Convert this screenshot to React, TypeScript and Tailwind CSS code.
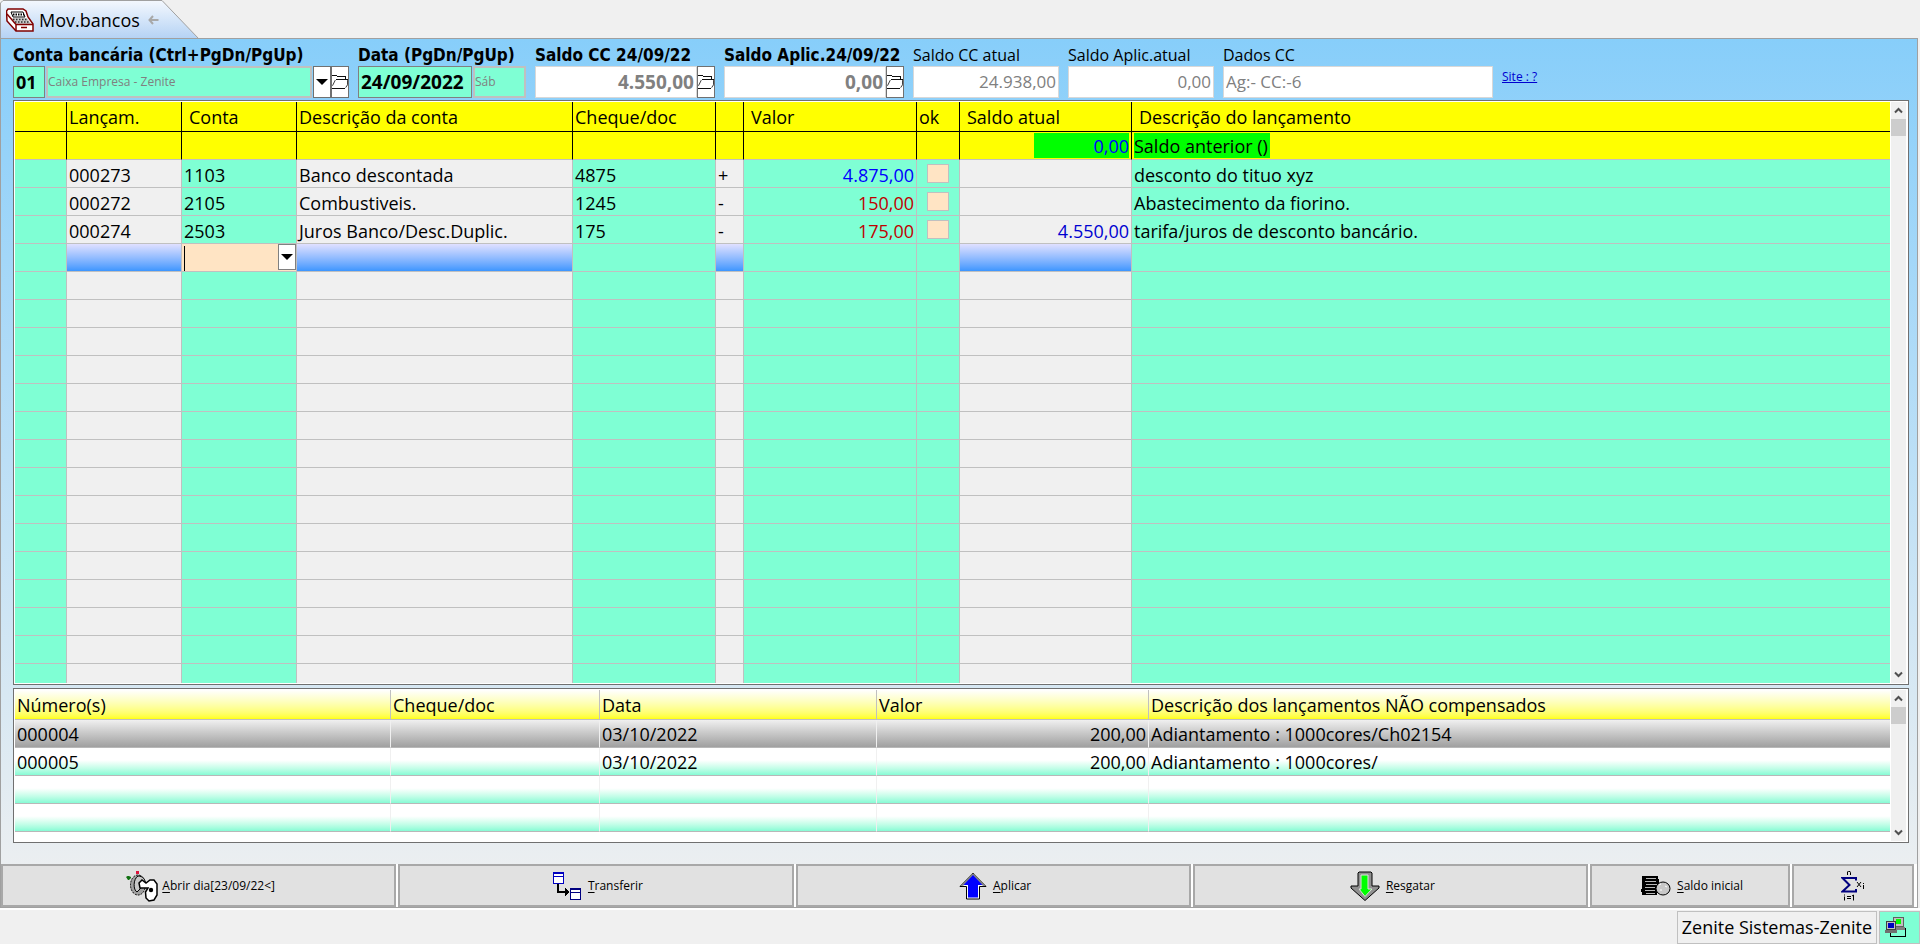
import type { ReactNode } from "react";

type Entry = {
  id: string;
  account: string;
  accountName: string;
  doc: string;
  sign: string;
  value: string;
  balance: string;
  text: string;
};

const entries: Entry[] = [
  { id: "000273", account: "1103", accountName: "Banco descontada", doc: "4875", sign: "+", value: "4.875,00", balance: "", text: "desconto do tituo xyz" },
  { id: "000272", account: "2105", accountName: "Combustiveis.", doc: "1245", sign: "-", value: "150,00", balance: "", text: "Abastecimento da fiorino." },
  { id: "000274", account: "2503", accountName: "Juros Banco/Desc.Duplic.", doc: "175", sign: "-", value: "175,00", balance: "4.550,00", text: "tarifa/juros de desconto bancário." },
];

const pending = [
  { id: "000004", date: "03/10/2022", value: "200,00", text: "Adiantamento : 1000cores/Ch02154" },
  { id: "000005", date: "03/10/2022", value: "200,00", text: "Adiantamento : 1000cores/" },
  { id: "", date: "", value: "", text: "" },
  { id: "", date: "", value: "", text: "" },
];

const aqua = "bg-[#7fffd4]";
const gray = "bg-[#f0f0f0]";
const highlight = "bg-linear-to-b from-[#e0e0ff] to-[#3c96ff]";
const columnColors = [aqua, gray, aqua, gray, aqua, gray, aqua, aqua, gray, aqua];
const cell = "h-[28px] border-b border-r border-[#c0c0c0] px-[2px] pb-0 whitespace-nowrap last:border-r-0";
const textCell = `${cell} pt-[3px] leading-[24px]`;
const headCell = "border-b border-r border-black pt-px pr-0 pb-0 text-left leading-[26px] font-normal whitespace-nowrap last:border-r-0";

function FolderIcon() {
  return (
    <svg width="17" height="16" viewBox="0 0 17 16" shapeRendering="crispEdges" fill="none" stroke="#000" aria-hidden="true">
      <path d="M0 1.5H5M5 2.5H14.500V5M4 5.500H17M0 14.500H14" />
      <path d="M3.5 6L0.500 12M16.500 6V11L14.500 14" stroke="#303030" shapeRendering="auto" />
    </svg>
  );
}

function DownTriangle() {
  return (
    <svg width="12" height="6" viewBox="0 0 12 6" aria-hidden="true">
      <path d="M0 0H12L6 6Z" />
    </svg>
  );
}

function FolderButton({ label }: { label: string }) {
  return (
    <button type="button" aria-label={label} className="flex w-[18px] shrink-0 items-center justify-center overflow-hidden border border-[#707070] bg-white">
      <FolderIcon />
    </button>
  );
}

function Chevron({ up }: { up?: boolean }) {
  return (
    <svg width="9" height="7" viewBox="0 0 9 7" fill="none" stroke="#505050" strokeWidth="2" aria-hidden="true">
      <path d={up ? "M1 5.5L4.5 2L8 5.5" : "M1 1.5L4.5 5L8 1.5"} />
    </svg>
  );
}

function ScrollBar() {
  return (
    <div className="flex w-[17px] shrink-0 flex-col border-l border-r border-white bg-[#f0f0f0]">
      <button aria-label="Rolar para cima" className="flex h-[17px] shrink-0 items-center justify-center">
        <Chevron up />
      </button>
      <div className="h-[17px] shrink-0 bg-[#cdcdcd]" />
      <div className="flex-1" />
      <button aria-label="Rolar para baixo" className="flex h-[17px] shrink-0 items-center justify-center">
        <Chevron />
      </button>
    </div>
  );
}

function Field({ id, label, width, bold, children }: { id: string; label: string; width: string; bold?: boolean; children: ReactNode }) {
  return (
    <div className={`flex shrink-0 flex-col ${width}`}>
      <label
        htmlFor={id}
        className={
          bold
            ? "h-[22px] font-['DejaVu_Sans_Condensed','DejaVu_Sans',sans-serif] text-[17px] leading-[22px] font-bold whitespace-nowrap"
            : "h-[22px] text-[16px] leading-[22px] whitespace-nowrap"
        }
      >
        {label}
      </label>
      <div className="flex h-[32px]">{children}</div>
    </div>
  );
}

function AmountInput({ id, value, bold }: { id: string; value: string; bold?: boolean }) {
  return (
    <input
      id={id}
      readOnly
      value={value}
      className={`w-full min-w-0 border border-[#d8d8d8] bg-white px-[2px] text-right text-[#808080] ${bold ? "text-[19px] font-bold" : "text-[17px]"}`}
    />
  );
}

function RegisterIcon() {
  return (
    <svg width="28" height="25" viewBox="0 0 28 25" aria-hidden="true">
      <path d="M2 1H17L20 3L22 9L27 16V23H10L1 13L0.500 3Z" fill="#fff" stroke="#800000" strokeWidth="1.500" />
      <path d="M5 4H17L19 9H7Z" fill="#fff" stroke="#000" />
      <path d="M7 6.500H18" stroke="#000" strokeWidth="2" strokeDasharray="1.500 1" />
      <path d="M6 10H21L25 16H10Z" fill="#c8c8c8" />
      <path d="M7 11.500H21M9 14H23" stroke="#303030" strokeWidth="1.500" strokeDasharray="1.500 1.500" />
      <path d="M1 6L10 16.500H27M10 16.500V23M15 19.500H21" fill="none" stroke="#800000" strokeWidth="1.500" />
    </svg>
  );
}

function KeyIcon() {
  return (
    <svg width="32" height="32" viewBox="0 0 32 32" aria-hidden="true">
      <path d="M10 1H13V4H10Z" fill="#dc143c" />
      <path d="M0 7L1.500 6H3L5 7V8L3 10H2Z" fill="#107010" />
      <ellipse cx="12" cy="15" rx="7.500" ry="10" fill="#a0a0a0" stroke="#000" strokeDasharray="2 1" />
      <path d="M12 6C17 6 20 10 19 14L14 19L11 22C7 20 7 9 12 6Z" fill="#c8c8c8" stroke="#000" />
      <path d="M13 13L16 10L20 13L24 10L28 10L31 14V25L28 30L23 31L20 28L19.500 22L22 18L14 18Z" fill="#fff" stroke="#000" strokeWidth="1.500" />
      <circle cx="25" cy="20" r="2.200" />
    </svg>
  );
}

function TransferIcon() {
  return (
    <svg width="28" height="28" viewBox="0 0 28 28" shapeRendering="crispEdges" aria-hidden="true">
      <rect x="0.5" y="0.5" width="10" height="11" fill="#fff" stroke="#0000c0" />
      <path d="M0 0H11V2H0ZM0 4H11V5H0Z" fill="#0000c0" />
      <rect x="17.5" y="16.5" width="10" height="11" fill="#fff" stroke="#000080" />
      <path d="M17 16H28V18H17ZM17 20H28V21H17Z" fill="#000080" />
      <path d="M4 12H6V19H12V16L16 20L12 24V21H4Z" />
    </svg>
  );
}

function ArrowUpIcon() {
  return (
    <svg width="28" height="28" viewBox="0 0 28 28" aria-hidden="true">
      <path d="M14 1L27 14.500H20.500V27H7.500V14.500H1Z" fill="#fff" stroke="#000" />
      <path d="M14 2L3 13.500" stroke="#808080" strokeWidth="2" />
      <path d="M14 2L25 13.500" stroke="#808080" strokeWidth="2" />
      <path d="M14 3L23.500 13H19V25.500H9V13H4.500Z" fill="#0000ff" />
    </svg>
  );
}

function ArrowDownIcon() {
  return (
    <svg width="30" height="30" viewBox="0 0 30 30" aria-hidden="true">
      <path d="M9 1H21L22 2V15H29V17L15 29.500L1 17V15H8V2Z" fill="#909090" stroke="#000" />
      <path d="M11 4H18V18H22L15 25.500L9 18H11Z" fill="#00ff00" stroke="#e0e0e0" />
    </svg>
  );
}

function CoinsIcon() {
  return (
    <svg width="30" height="20" viewBox="0 0 30 20" aria-hidden="true">
      <path d="M1 0H17V3H18V17H16V19H1V16H0V13H1Z" />
      <path d="M5 2.500H15M4 5.500H15M5 8.500H16M4 11.500H14M4 14.500H14M5 17.500H14" stroke="#b8b8b8" />
      <ellipse cx="22" cy="12.500" rx="7" ry="6.500" fill="#c8c8c8" stroke="#000" />
      <path d="M18 9L20 8M19 14H21M24 10L26 11" stroke="#fff" />
    </svg>
  );
}

function SumIcon() {
  return (
    <svg width="24" height="30" viewBox="0 0 24 30" fill="none" aria-hidden="true">
      <path d="M15 9.500V7H1.500L8.500 14L1.500 20.500H15V18" stroke="#000080" strokeWidth="2" />
      <path d="M6.500 4V0.500M6.500 1.500L7.500 0.500H9L9.500 1.500V4" stroke="#000" />
      <path d="M16 11L20 16M20 11L16 16M22.500 14V18M22.500 12V13" stroke="#000" />
      <path d="M3.500 25.500V29.500M3.500 23.500V24.500M6 25.500H10M6 27.500H10M11 25L12.500 24V29.500" stroke="#000" />
    </svg>
  );
}

function NetworkIcon() {
  return (
    <svg width="21" height="21" viewBox="0 0 21 21" shapeRendering="crispEdges" aria-hidden="true">
      <rect x="8.500" y="0.500" width="10" height="9" fill="#c0c0c0" stroke="#606060" />
      <rect x="11" y="2" width="5" height="5" fill="#00ff00" />
      <rect x="9" y="10" width="11" height="3" fill="#808080" />
      <rect x="1.500" y="4.500" width="9" height="8" fill="#c0c0c0" stroke="#404040" />
      <rect x="3" y="6" width="6" height="5" fill="#0000c0" />
      <rect x="0" y="13" width="12" height="3" fill="#707070" />
      <path d="M5.500 16V19.500H20.500V11" fill="none" stroke="#000" />
    </svg>
  );
}

function ActionButton({ icon, label, className }: { icon: ReactNode; label?: string; className: string }) {
  return (
    <button
      aria-label={label ?? "Somatório"}
      className={`flex min-w-0 items-center justify-center border-2 border-[#a8a8a8] bg-[#e1e1e1] text-[12px] ${className}`}
    >
      {icon}
      {label && (
        <span>
          <span className="underline underline-offset-2">{label[0]}</span>
          {label.slice(1)}
        </span>
      )}
    </button>
  );
}

export default function App() {
  return (
    <div className="flex h-screen flex-col bg-[#f0f0f0] font-['Open_Sans','Noto_Sans',sans-serif] text-[18px] text-black">
      <header className="grid h-[38px] shrink-0">
        <svg width="200" height="39" viewBox="0 0 200 39" className="col-start-1 row-start-1" aria-hidden="true">
          <defs>
            <linearGradient id="tab" x1="0" y1="0" x2="0" y2="1">
              <stop offset="0" stopColor="#f4f8fe" />
              <stop offset="1" stopColor="#b4d2f4" />
            </linearGradient>
          </defs>
          <path d="M0.500 39V3L3 0.500H162L199 39" fill="url(#tab)" stroke="#a0a0a0" />
        </svg>
        <div className="col-start-1 row-start-1 flex items-center gap-[5px] pt-px pl-[6px]">
          <RegisterIcon />
          <h1 className="text-[18px] leading-[24px]">Mov.bancos</h1>
          <svg width="11" height="10" viewBox="0 0 11 10" className="ml-[3px]" fill="none" stroke="#a8a8a8" strokeWidth="2" aria-hidden="true">
            <path d="M5 1L1.500 5L5 9M2 5H10.500" />
          </svg>
        </div>
      </header>

      <main className="mr-[2px] flex min-h-0 flex-1 flex-col border border-[#a0a0a0] bg-linear-to-b from-[#87cefa] to-[#f0f0f0]">
        <form className="flex shrink-0 gap-[9px] pt-[5px] pl-[12px]">
          <Field id="conta" label="Conta bancária (Ctrl+PgDn/PgUp)" width="w-[336px]" bold>
            <input id="conta" defaultValue="01" className="w-[32px] border border-[#808080] bg-[#7fffd4] px-[2px] font-bold" />
            <input aria-label="Nome da conta" readOnly value="Caixa Empresa - Zenite" className="ml-px min-w-0 flex-1 border-2 border-[#c0c0c0] bg-[#7fffd4] text-[12px] text-[#808080]" />
            <button aria-label="Escolher conta" type="button" className="ml-px flex w-[18px] shrink-0 items-center justify-center border border-[#707070] bg-white">
              <DownTriangle />
            </button>
            <FolderButton label="Abrir conta" />
          </Field>
          <Field id="data" label="Data (PgDn/PgUp)" width="w-[168px]" bold>
            <input id="data" defaultValue="24/09/2022" className="w-[114px] border border-[#808080] bg-[#7fffd4] px-[2px] text-[19px] font-bold" />
            <input aria-label="Dia da semana" readOnly value="Sáb" className="ml-px min-w-0 flex-1 border-2 border-[#c0c0c0] bg-[#7fffd4] text-[12px] text-[#808080]" />
          </Field>
          <Field id="saldo-cc" label="Saldo CC 24/09/22" width="w-[180px]" bold>
            <AmountInput id="saldo-cc" value="4.550,00" bold />
            <FolderButton label="Abrir saldo CC" />
          </Field>
          <Field id="saldo-aplic" label="Saldo Aplic.24/09/22" width="w-[180px]" bold>
            <AmountInput id="saldo-aplic" value="0,00" bold />
            <FolderButton label="Abrir saldo de aplicação" />
          </Field>
          <Field id="saldo-cc-atual" label="Saldo CC atual" width="w-[146px]">
            <AmountInput id="saldo-cc-atual" value="24.938,00" />
          </Field>
          <Field id="saldo-aplic-atual" label="Saldo Aplic.atual" width="w-[146px]">
            <AmountInput id="saldo-aplic-atual" value="0,00" />
          </Field>
          <Field id="dados-cc" label="Dados CC" width="w-[270px]">
            <input id="dados-cc" readOnly value="Ag:- CC:-6" className="w-full border border-[#d8d8d8] bg-white px-[2px] text-[17px] text-[#808080]" />
          </Field>
          <a href="#site" className="pt-[24px] text-[12px] leading-[18px] text-[#0000d0] underline">Site : ?</a>
        </form>

        <section className="mt-[2px] mr-[8px] ml-[12px] flex min-h-0 flex-1 border border-[#707070] bg-white p-px">
          <div className="min-w-0 flex-1 overflow-hidden">
            <table className="w-full table-fixed border-separate border-spacing-0">
              <colgroup>
                <col className="w-[52px]" />
                <col className="w-[115px]" />
                <col className="w-[115px]" />
                <col className="w-[276px]" />
                <col className="w-[143px]" />
                <col className="w-[28px]" />
                <col className="w-[173px]" />
                <col className="w-[43px]" />
                <col className="w-[172px]" />
                <col />
              </colgroup>
              <thead>
                <tr className="h-[30px] bg-[#ffff00]">
                  <th className={headCell} />
                  <th className={`${headCell} pl-[2px]`}>Lançam.</th>
                  <th className={`${headCell} pl-[7px]`}>Conta</th>
                  <th className={`${headCell} pl-[2px]`}>Descrição da conta</th>
                  <th className={`${headCell} pl-[2px]`}>Cheque/doc</th>
                  <th className={headCell} />
                  <th className={`${headCell} pl-[7px]`}>Valor</th>
                  <th className={`${headCell} pl-[2px]`}>ok</th>
                  <th className={`${headCell} pl-[7px]`}>Saldo atual</th>
                  <th className={`${headCell} pl-[7px]`}>Descrição do lançamento</th>
                </tr>
              </thead>
              <tbody>
                <tr className="bg-[#ffff00]">
                  {columnColors.slice(0, 8).map((_, i) => (
                    <td key={i} className="h-[28px] border-r border-b border-r-black border-b-[#c0c0c0] p-0" />
                  ))}
                  <td className="h-[28px] border-r border-b border-r-black border-b-[#c0c0c0] px-[2px] py-0">
                    <div className="ml-auto h-[25px] w-[95px] bg-[#00ff00] pt-px text-right leading-[24px] text-[#0000ff]">0,00</div>
                  </td>
                  <td className="h-[28px] border-b border-[#c0c0c0] px-[2px] py-0">
                    <div className="h-[25px] w-fit bg-[#00ff00] pt-px pr-[2px] leading-[24px] whitespace-nowrap">Saldo anterior ()</div>
                  </td>
                </tr>
                {entries.map((e) => (
                  <tr key={e.id}>
                    <td className={`${textCell} ${aqua}`} />
                    <td className={`${textCell} ${gray}`}>{e.id}</td>
                    <td className={`${textCell} ${aqua}`}>{e.account}</td>
                    <td className={`${textCell} ${gray}`}>{e.accountName}</td>
                    <td className={`${textCell} ${aqua}`}>{e.doc}</td>
                    <td className={`${textCell} ${gray}`}>{e.sign}</td>
                    <td className={`${textCell} ${aqua} text-right ${e.sign === "+" ? "text-[#0000ff]" : "text-[#c00000]"}`}>{e.value}</td>
                    <td className={`${cell} ${aqua} pt-[4px] align-top`}>
                      <input type="checkbox" aria-label={`ok ${e.id}`} className="mx-auto block h-[19px] w-[22px] appearance-none border border-[#c0c0c0] bg-[#ffe4c4]" />
                    </td>
                    <td className={`${textCell} ${gray} text-right text-[#0000d0]`}>{e.balance}</td>
                    <td className={`${textCell} ${aqua}`}>{e.text}</td>
                  </tr>
                ))}
                <tr>
                  {columnColors.map((color, i) =>
                    i === 2 ? (
                      <td key={i} className="h-[28px] border-r border-b border-[#c0c0c0] bg-white p-0">
                        <div className="flex h-[27px] bg-[#ffe4c4] pl-[2px]">
                          <span className="mt-[2px] w-px bg-black" />
                          <input aria-label="Conta do novo lançamento" className="min-w-0 flex-1 bg-transparent outline-none" />
                          <button aria-label="Escolher conta do lançamento" className="flex h-[26px] w-[18px] items-center justify-center border border-[#808080] bg-white">
                            <DownTriangle />
                          </button>
                        </div>
                      </td>
                    ) : (
                      <td key={i} className={`${cell} pt-0 ${color === gray ? highlight : color}`} />
                    ),
                  )}
                </tr>
                {Array.from({ length: 24 }, (_, r) => (
                  <tr key={r}>
                    {columnColors.map((color, i) => (
                      <td key={i} className={`${cell} pt-0 ${color}`} />
                    ))}
                  </tr>
                ))}
              </tbody>
            </table>
          </div>
          <ScrollBar />
        </section>

        <section className="mt-[3px] mr-[8px] mb-[21px] ml-[12px] flex h-[155px] shrink-0 border border-[#707070] bg-white p-px">
          <div className="min-w-0 flex-1 overflow-hidden">
            <table className="w-full table-fixed border-separate border-spacing-0">
              <colgroup>
                <col className="w-[376px]" />
                <col className="w-[209px]" />
                <col className="w-[277px]" />
                <col className="w-[272px]" />
                <col />
              </colgroup>
              <thead>
                <tr>
                  {["Número(s)", "Cheque/doc", "Data", "Valor", "Descrição dos lançamentos NÃO compensados"].map((h) => (
                    <th key={h} className="h-[30px] border-r border-b border-[#c0c0c0] bg-linear-to-b from-white to-[#ffff00] pt-px pr-0 pb-0 pl-[2px] text-left leading-[26px] font-normal whitespace-nowrap last:border-r-0">
                      {h}
                    </th>
                  ))}
                </tr>
              </thead>
              <tbody>
                {pending.map((p, r) => {
                  const c = `h-[28px] border-r border-b border-r-[#f0f0f0] border-b-[#b8b8b8] px-[2px] pt-px pb-0 leading-[24px] whitespace-nowrap last:border-r-0 ${
                    r === 0 ? "bg-linear-to-b from-[#f0f0f0] to-[#a0a0a0]" : "bg-linear-to-b from-white from-45% to-[#86fbd5]"
                  }`;
                  return (
                    <tr key={r}>
                      <td className={c}>{p.id}</td>
                      <td className={c} />
                      <td className={c}>{p.date}</td>
                      <td className={`${c} text-right`}>{p.value}</td>
                      <td className={c}>{p.text}</td>
                    </tr>
                  );
                })}
              </tbody>
            </table>
          </div>
          <ScrollBar />
        </section>

        <nav className="flex h-[43px] shrink-0 gap-[2px] bg-white pr-[3px]">
          <ActionButton icon={<KeyIcon />} label="Abrir dia[23/09/22<]" className="flex-1 gap-[4px] pl-[4px]" />
          <ActionButton icon={<TransferIcon />} label="Transferir" className="flex-1 gap-[7px] pl-[4px]" />
          <ActionButton icon={<ArrowUpIcon />} label="Aplicar" className="flex-1 gap-[6px] pl-[4px]" />
          <ActionButton icon={<ArrowDownIcon />} label="Resgatar" className="flex-1 gap-[6px] pl-[4px]" />
          <ActionButton icon={<CoinsIcon />} label="Saldo inicial" className="w-[200px] shrink-0 gap-[6px] pl-[4px]" />
          <ActionButton icon={<SumIcon />} className="w-[122px] shrink-0" />
        </nav>
      </main>

      <footer className="flex h-[36px] shrink-0 justify-end gap-[2px] border-t-2 border-white pt-px">
        <div className="flex items-center border border-[#c0c0c0] px-[4px]">Zenite Sistemas-Zenite</div>
        <div className="flex w-[41px] items-center border border-[#c0c0c0] bg-[#7fffd4] pl-[5px]">
          <NetworkIcon />
        </div>
      </footer>
    </div>
  );
}
